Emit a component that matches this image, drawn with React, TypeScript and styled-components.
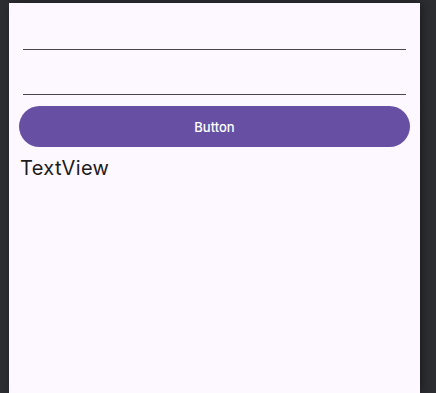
import React from "react";
import styled, { createGlobalStyle } from "styled-components";

const Global = createGlobalStyle`
  html, body {
    margin: 0;
    padding: 0;
    background: #2b2d30;
    height: 100%;
    overflow: hidden;
  }
  #root {
    height: 100%;
  }
`;

const Stage = styled.div`
  height: 100%;
  padding: 3px 0 0 9px;
  box-sizing: border-box;
  display: flex;
`;

const Phone = styled.div`
  width: 411px;
  height: 100%;
  background: #fdf7ff;
  box-shadow: 2px 0 8px rgba(0, 0, 0, 0.35);
  display: flex;
  flex-direction: column;
  padding-top: 2px;
  box-sizing: border-box;
  font-family: Inter, Roboto, "Liberation Sans", sans-serif;
`;

const Field = styled.div`
  height: 44px;
  margin: 0 14px;
  border-bottom: 1px solid #49454f;
`;

const Button = styled.button`
  margin: 11px 10px 0 10px;
  height: 41px;
  border: none;
  border-radius: 21px;
  background: #6750a4;
  color: #ffffff;
  font-family: Inter, Roboto, "Liberation Sans", sans-serif;
  font-weight: 500;
  font-size: 13px;
  letter-spacing: 0;
  padding: 0;
  cursor: pointer;
`;

const Label = styled.div`
  margin: 9px 0 0 11px;
  font-size: 20px;
  line-height: 24px;
  font-weight: 400;
  letter-spacing: 0.35px;
  color: #1d1b20;
`;

export default function App() {
  return (
    <>
      <Global />
      <Stage>
        <Phone>
          <Field />
          <Field />
          <Button>Button</Button>
          <Label>TextView</Label>
        </Phone>
      </Stage>
    </>
  );
}
